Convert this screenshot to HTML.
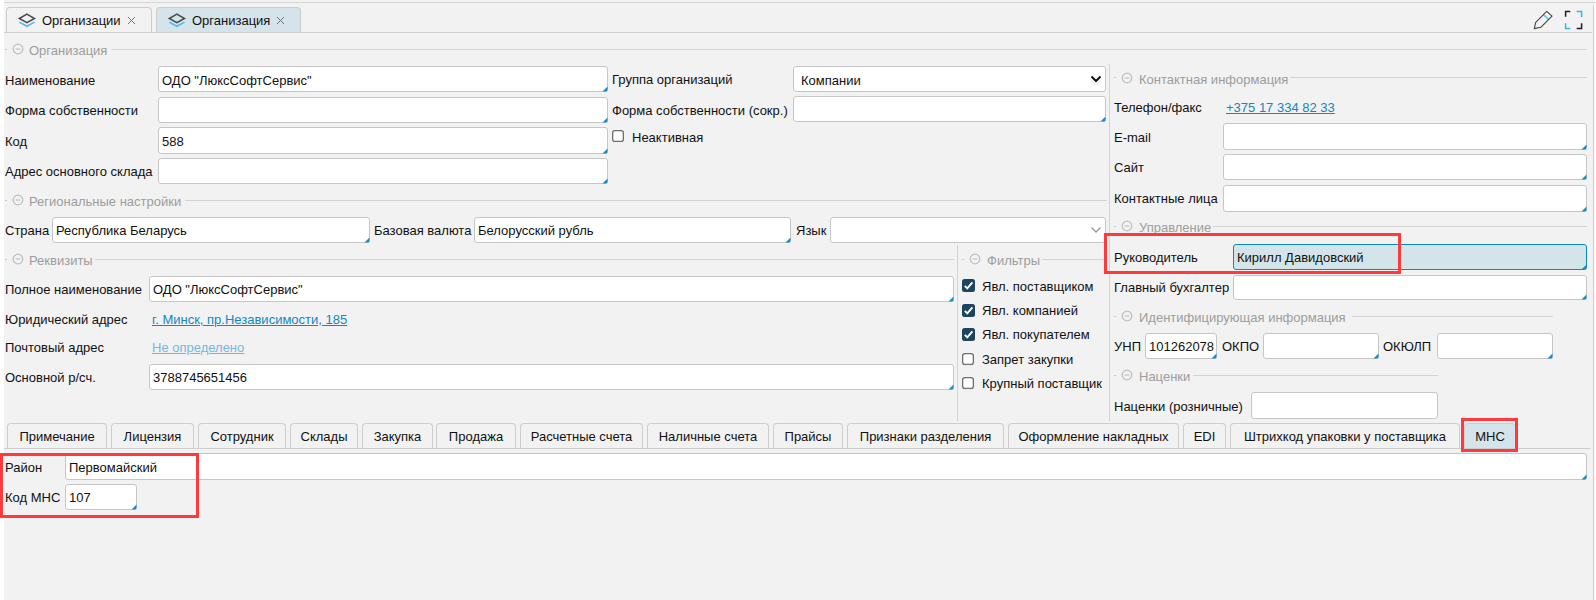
<!DOCTYPE html>
<html><head><meta charset="utf-8"><style>
html,body{margin:0;padding:0;}
body{width:1596px;height:600px;overflow:hidden;background:#f2f2f2;position:relative;font-family:"Liberation Sans", sans-serif;font-size:13px;}
.t{position:absolute;white-space:pre;line-height:15px;font-size:13px;}
.b{position:absolute;box-sizing:border-box;}
.s{position:absolute;overflow:visible;}
</style></head><body>

<div class="b" style="left:0;top:0;width:4px;height:600px;background:#fff"></div>
<div class="b" style="left:1594px;top:0;width:2px;height:600px;background:#fbfbfb"></div>
<div class="b" style="left:4px;top:2px;width:1592px;height:1px;background:#d6d6d6"></div>
<div class="b" style="left:1593px;top:5px;width:1px;height:595px;background:#cfcfcf"></div>
<div class="b" style="left:4px;top:32px;width:1588px;height:1px;background:#cfcfcf"></div>
<div class="b" style="left:6px;top:7px;width:146px;height:26px;background:#f2f2f2;border:1px solid #cdcdcd;border-bottom:none;border-radius:4px 4px 0 0"></div>
<div class="b" style="left:156px;top:7px;width:145px;height:26px;background:#d5e4ea;border:1px solid #cdcdcd;border-bottom:none;border-radius:4px 4px 0 0"></div>
<div class="b" style="left:4px;top:32px;width:1588px;height:1px;background:#cfcfcf"></div>
<svg class="s" style="left:17px;top:12px" width="20" height="16" viewBox="0 0 20 16"><path d="M2.3 10.1 L9.9 14.3 L17.5 10.1" fill="none" stroke="#4cbdee" stroke-width="1.6"/><path d="M9.9 2.2 L17.5 6.5 L9.9 10.7 L2.3 6.5 Z" fill="none" stroke="#4a4a4a" stroke-width="1.5"/></svg>
<div class="t" style="left:42px;top:13px;color:#111111;">Организации</div>
<svg class="s" style="left:167px;top:12px" width="20" height="16" viewBox="0 0 20 16"><path d="M2.3 10.1 L9.9 14.3 L17.5 10.1" fill="none" stroke="#4cbdee" stroke-width="1.6"/><path d="M9.9 2.2 L17.5 6.5 L9.9 10.7 L2.3 6.5 Z" fill="none" stroke="#4a4a4a" stroke-width="1.5"/></svg>
<div class="t" style="left:192px;top:13px;color:#111111;">Организация</div>
<svg class="s" style="left:127px;top:16px" width="9" height="9" viewBox="0 0 9 9"><path d="M1 1 L8 8 M8 1 L1 8" stroke="#707070" stroke-width="1"/></svg>
<svg class="s" style="left:276px;top:16px" width="9" height="9" viewBox="0 0 9 9"><path d="M1 1 L8 8 M8 1 L1 8" stroke="#707070" stroke-width="1"/></svg>
<svg class="s" style="left:1533px;top:10px" width="21" height="21" viewBox="0 0 21 21"><path d="M10.4 4.6 L15.6 9.4" stroke="#62c6ee" stroke-width="1.6"/><path d="M1.3 18.6 L2.7 12.3 L13.7 1.3 L19 6.2 L7.8 17.3 Z" fill="none" stroke="#454545" stroke-width="1.1" stroke-linejoin="round"/></svg>
<svg class="s" style="left:1564px;top:10px" width="20" height="20" viewBox="0 0 20 20"><path d="M1.6 6.8 V1.6 H6.3" fill="none" stroke="#1e1e1e" stroke-width="1.5"/><path d="M12.7 1.6 H17.6 V6.9" fill="none" stroke="#2ab6f0" stroke-width="1.5"/><path d="M1.6 13.3 V18.4 H6.3" fill="none" stroke="#2ab6f0" stroke-width="1.5"/><path d="M12.7 18.4 H17.6 V13.3" fill="none" stroke="#1e1e1e" stroke-width="1.5"/></svg>
<div class="b" style="left:5px;top:49px;width:2px;height:1px;background:#c8c8c8"></div>
<svg class="s" style="left:11.5px;top:43.3px" width="12" height="12" viewBox="0 0 12 12"><circle cx="6" cy="6" r="4.8" fill="none" stroke="#c0c0c0" stroke-width="1.3"/><path d="M3.7 6 H8.3" stroke="#c4c4c4" stroke-width="1.3"/></svg>
<div class="t" style="left:29px;top:43px;color:#9d9d9d;">Организация</div>
<div class="b" style="left:111px;top:49px;width:1476px;height:1px;background:#d4d4d4"></div>
<div class="t" style="left:5px;top:73px;color:#111111;">Наименование</div>
<div class="t" style="left:5px;top:103px;color:#111111;">Форма собственности</div>
<div class="t" style="left:5px;top:134px;color:#111111;">Код</div>
<div class="t" style="left:5px;top:164px;color:#111111;">Адрес основного склада</div>
<div class="b" style="left:158px;top:66px;width:450px;height:26px;background:#fff;border:1px solid #c6c6c6;border-radius:3px;"></div>
<svg class="s" style="left:602px;top:86px" width="6" height="6" viewBox="0 0 6 6"><path d="M5.5 0.5 L5.5 4 Q5.5 5.5 4 5.5 L0.5 5.5 Z" fill="#1b8ac4"/></svg>
<div class="t" style="left:162px;top:73px;color:#111111;">ОДО &quot;ЛюксСофтСервис&quot;</div>
<div class="b" style="left:158px;top:97px;width:450px;height:26px;background:#fff;border:1px solid #c6c6c6;border-radius:3px;"></div>
<svg class="s" style="left:602px;top:117px" width="6" height="6" viewBox="0 0 6 6"><path d="M5.5 0.5 L5.5 4 Q5.5 5.5 4 5.5 L0.5 5.5 Z" fill="#1b8ac4"/></svg>
<div class="b" style="left:158px;top:127px;width:450px;height:27px;background:#fff;border:1px solid #c6c6c6;border-radius:3px;"></div>
<svg class="s" style="left:602px;top:148px" width="6" height="6" viewBox="0 0 6 6"><path d="M5.5 0.5 L5.5 4 Q5.5 5.5 4 5.5 L0.5 5.5 Z" fill="#1b8ac4"/></svg>
<div class="t" style="left:162px;top:134px;color:#111111;">588</div>
<div class="b" style="left:158px;top:158px;width:450px;height:26px;background:#fff;border:1px solid #c6c6c6;border-radius:3px;"></div>
<svg class="s" style="left:602px;top:178px" width="6" height="6" viewBox="0 0 6 6"><path d="M5.5 0.5 L5.5 4 Q5.5 5.5 4 5.5 L0.5 5.5 Z" fill="#1b8ac4"/></svg>
<div class="t" style="left:612px;top:72px;color:#111111;">Группа организаций</div>
<div class="b" style="left:793px;top:66px;width:313px;height:26px;background:#fff;border:1px solid #c6c6c6;border-radius:3px;"></div>
<div class="t" style="left:801px;top:73px;color:#111111;">Компании</div>
<svg class="s" style="left:1090px;top:75px" width="12" height="8" viewBox="0 0 12 8"><path d="M1.5 1.5 L6 6 L10.5 1.5" fill="none" stroke="#111" stroke-width="2"/></svg>
<div class="t" style="left:612px;top:103px;color:#111111;">Форма собственности (сокр.)</div>
<div class="b" style="left:793px;top:96px;width:313px;height:26px;background:#fff;border:1px solid #c6c6c6;border-radius:3px;"></div>
<svg class="s" style="left:1100px;top:116px" width="6" height="6" viewBox="0 0 6 6"><path d="M5.5 0.5 L5.5 4 Q5.5 5.5 4 5.5 L0.5 5.5 Z" fill="#1b8ac4"/></svg>
<svg class="s" style="left:612px;top:130px" width="12" height="12" viewBox="0 0 12 12"><rect x="0.65" y="0.65" width="10.7" height="10.7" rx="2.2" fill="#fff" stroke="#6e6e6e" stroke-width="1.3"/></svg>
<div class="t" style="left:632px;top:130px;color:#111111;">Неактивная</div>
<div class="b" style="left:1109px;top:64px;width:1px;height:357px;background:#d4d4d4"></div>
<div class="b" style="left:1114px;top:77px;width:2px;height:1px;background:#c8c8c8"></div>
<svg class="s" style="left:1120.5px;top:72px" width="12" height="12" viewBox="0 0 12 12"><circle cx="6" cy="6" r="4.8" fill="none" stroke="#c0c0c0" stroke-width="1.3"/><path d="M3.7 6 H8.3" stroke="#c4c4c4" stroke-width="1.3"/></svg>
<div class="t" style="left:1139px;top:72px;color:#9d9d9d;">Контактная информация</div>
<div class="b" style="left:1290px;top:77px;width:297px;height:1px;background:#d4d4d4"></div>
<div class="t" style="left:1114px;top:100px;color:#111111;">Телефон/факс</div>
<div class="t" style="left:1226px;top:100px;color:#1287c0;text-decoration:underline;">+375 17 334 82 33</div>
<div class="t" style="left:1114px;top:130px;color:#111111;">E-mail</div>
<div class="b" style="left:1223px;top:123px;width:364px;height:27px;background:#fff;border:1px solid #c6c6c6;border-radius:3px;"></div>
<svg class="s" style="left:1581px;top:144px" width="6" height="6" viewBox="0 0 6 6"><path d="M5.5 0.5 L5.5 4 Q5.5 5.5 4 5.5 L0.5 5.5 Z" fill="#1b8ac4"/></svg>
<div class="t" style="left:1114px;top:160px;color:#111111;">Сайт</div>
<div class="b" style="left:1223px;top:154px;width:364px;height:26px;background:#fff;border:1px solid #c6c6c6;border-radius:3px;"></div>
<svg class="s" style="left:1581px;top:174px" width="6" height="6" viewBox="0 0 6 6"><path d="M5.5 0.5 L5.5 4 Q5.5 5.5 4 5.5 L0.5 5.5 Z" fill="#1b8ac4"/></svg>
<div class="t" style="left:1114px;top:191px;color:#111111;">Контактные лица</div>
<div class="b" style="left:1223px;top:185px;width:364px;height:27px;background:#fff;border:1px solid #c6c6c6;border-radius:3px;"></div>
<svg class="s" style="left:1581px;top:206px" width="6" height="6" viewBox="0 0 6 6"><path d="M5.5 0.5 L5.5 4 Q5.5 5.5 4 5.5 L0.5 5.5 Z" fill="#1b8ac4"/></svg>
<div class="b" style="left:1114px;top:226px;width:2px;height:1px;background:#c8c8c8"></div>
<svg class="s" style="left:1120.5px;top:220.3px" width="12" height="12" viewBox="0 0 12 12"><circle cx="6" cy="6" r="4.8" fill="none" stroke="#c0c0c0" stroke-width="1.3"/><path d="M3.7 6 H8.3" stroke="#c4c4c4" stroke-width="1.3"/></svg>
<div class="t" style="left:1139px;top:220px;color:#9d9d9d;">Управление</div>
<div class="b" style="left:1213px;top:226px;width:374px;height:1px;background:#d4d4d4"></div>
<div class="t" style="left:1114px;top:250px;color:#111111;">Руководитель</div>
<div class="b" style="left:1233px;top:244px;width:354px;height:26px;background:#d4e5ea;border:1px solid #0b89be;border-radius:3px;"></div>
<svg class="s" style="left:1581px;top:264px" width="6" height="6" viewBox="0 0 6 6"><path d="M5.5 0.5 L5.5 4 Q5.5 5.5 4 5.5 L0.5 5.5 Z" fill="#1b8ac4"/></svg>
<div class="t" style="left:1237px;top:250px;color:#111111;">Кирилл Давидовский</div>
<div class="t" style="left:1114px;top:280px;color:#111111;">Главный бухгалтер</div>
<div class="b" style="left:1233px;top:275px;width:354px;height:25px;background:#fff;border:1px solid #c6c6c6;border-radius:3px;"></div>
<svg class="s" style="left:1581px;top:294px" width="6" height="6" viewBox="0 0 6 6"><path d="M5.5 0.5 L5.5 4 Q5.5 5.5 4 5.5 L0.5 5.5 Z" fill="#1b8ac4"/></svg>
<div class="b" style="left:1114px;top:316px;width:2px;height:1px;background:#c8c8c8"></div>
<svg class="s" style="left:1120.5px;top:310.3px" width="12" height="12" viewBox="0 0 12 12"><circle cx="6" cy="6" r="4.8" fill="none" stroke="#c0c0c0" stroke-width="1.3"/><path d="M3.7 6 H8.3" stroke="#c4c4c4" stroke-width="1.3"/></svg>
<div class="t" style="left:1139px;top:310px;color:#9d9d9d;">Идентифицирующая информация</div>
<div class="b" style="left:1352px;top:316px;width:201px;height:1px;background:#d4d4d4"></div>
<div class="t" style="left:1114px;top:339px;color:#111111;">УНП</div>
<div class="b" style="left:1145px;top:333px;width:72px;height:26px;background:#fff;border:1px solid #c6c6c6;border-radius:3px;"></div>
<svg class="s" style="left:1211px;top:353px" width="6" height="6" viewBox="0 0 6 6"><path d="M5.5 0.5 L5.5 4 Q5.5 5.5 4 5.5 L0.5 5.5 Z" fill="#1b8ac4"/></svg>
<div class="t" style="left:1149px;top:339px;color:#111111;">101262078</div>
<div class="t" style="left:1222px;top:339px;color:#111111;">ОКПО</div>
<div class="b" style="left:1263px;top:333px;width:116px;height:26px;background:#fff;border:1px solid #c6c6c6;border-radius:3px;"></div>
<svg class="s" style="left:1373px;top:353px" width="6" height="6" viewBox="0 0 6 6"><path d="M5.5 0.5 L5.5 4 Q5.5 5.5 4 5.5 L0.5 5.5 Z" fill="#1b8ac4"/></svg>
<div class="t" style="left:1383px;top:339px;color:#111111;">ОКЮЛП</div>
<div class="b" style="left:1437px;top:333px;width:116px;height:26px;background:#fff;border:1px solid #c6c6c6;border-radius:3px;"></div>
<svg class="s" style="left:1547px;top:353px" width="6" height="6" viewBox="0 0 6 6"><path d="M5.5 0.5 L5.5 4 Q5.5 5.5 4 5.5 L0.5 5.5 Z" fill="#1b8ac4"/></svg>
<div class="b" style="left:1114px;top:375px;width:2px;height:1px;background:#c8c8c8"></div>
<svg class="s" style="left:1120.5px;top:369.3px" width="12" height="12" viewBox="0 0 12 12"><circle cx="6" cy="6" r="4.8" fill="none" stroke="#c0c0c0" stroke-width="1.3"/><path d="M3.7 6 H8.3" stroke="#c4c4c4" stroke-width="1.3"/></svg>
<div class="t" style="left:1139px;top:369px;color:#9d9d9d;">Наценки</div>
<div class="b" style="left:1193px;top:375px;width:245px;height:1px;background:#d4d4d4"></div>
<div class="t" style="left:1114px;top:399px;color:#111111;">Наценки (розничные)</div>
<div class="b" style="left:1251px;top:392px;width:187px;height:27px;background:#fff;border:1px solid #c6c6c6;border-radius:3px;"></div>
<div class="b" style="left:5px;top:200px;width:2px;height:1px;background:#c8c8c8"></div>
<svg class="s" style="left:11.5px;top:194.3px" width="12" height="12" viewBox="0 0 12 12"><circle cx="6" cy="6" r="4.8" fill="none" stroke="#c0c0c0" stroke-width="1.3"/><path d="M3.7 6 H8.3" stroke="#c4c4c4" stroke-width="1.3"/></svg>
<div class="t" style="left:29px;top:194px;color:#9d9d9d;">Региональные настройки</div>
<div class="b" style="left:185px;top:200px;width:922px;height:1px;background:#d4d4d4"></div>
<div class="t" style="left:5px;top:223px;color:#111111;">Страна</div>
<div class="b" style="left:52px;top:217px;width:318px;height:26px;background:#fff;border:1px solid #c6c6c6;border-radius:3px;"></div>
<svg class="s" style="left:364px;top:237px" width="6" height="6" viewBox="0 0 6 6"><path d="M5.5 0.5 L5.5 4 Q5.5 5.5 4 5.5 L0.5 5.5 Z" fill="#1b8ac4"/></svg>
<div class="t" style="left:56px;top:223px;color:#111111;">Республика Беларусь</div>
<div class="t" style="left:374px;top:223px;color:#111111;">Базовая валюта</div>
<div class="b" style="left:474px;top:217px;width:317px;height:26px;background:#fff;border:1px solid #c6c6c6;border-radius:3px;"></div>
<svg class="s" style="left:785px;top:237px" width="6" height="6" viewBox="0 0 6 6"><path d="M5.5 0.5 L5.5 4 Q5.5 5.5 4 5.5 L0.5 5.5 Z" fill="#1b8ac4"/></svg>
<div class="t" style="left:478px;top:223px;color:#111111;">Белорусский рубль</div>
<div class="t" style="left:796px;top:223px;color:#111111;">Язык</div>
<div class="b" style="left:830px;top:217px;width:276px;height:26px;background:#fff;border:1px solid #c6c6c6;border-radius:3px;"></div>
<svg class="s" style="left:1090px;top:226px" width="12" height="8" viewBox="0 0 12 8"><path d="M1.5 1.5 L6 6 L10.5 1.5" fill="none" stroke="#9a9a9a" stroke-width="1.3"/></svg>
<div class="b" style="left:5px;top:259px;width:2px;height:1px;background:#c8c8c8"></div>
<svg class="s" style="left:11.5px;top:253.3px" width="12" height="12" viewBox="0 0 12 12"><circle cx="6" cy="6" r="4.8" fill="none" stroke="#c0c0c0" stroke-width="1.3"/><path d="M3.7 6 H8.3" stroke="#c4c4c4" stroke-width="1.3"/></svg>
<div class="t" style="left:29px;top:253px;color:#9d9d9d;">Реквизиты</div>
<div class="b" style="left:95px;top:259px;width:859px;height:1px;background:#d4d4d4"></div>
<div class="t" style="left:5px;top:282px;color:#111111;">Полное наименование</div>
<div class="b" style="left:149px;top:276px;width:805px;height:26px;background:#fff;border:1px solid #c6c6c6;border-radius:3px;"></div>
<svg class="s" style="left:948px;top:296px" width="6" height="6" viewBox="0 0 6 6"><path d="M5.5 0.5 L5.5 4 Q5.5 5.5 4 5.5 L0.5 5.5 Z" fill="#1b8ac4"/></svg>
<div class="t" style="left:153px;top:282px;color:#111111;">ОДО &quot;ЛюксСофтСервис&quot;</div>
<div class="t" style="left:5px;top:312px;color:#111111;">Юридический адрес</div>
<div class="t" style="left:152px;top:312px;color:#1287c0;text-decoration:underline;">г. Минск, пр.Независимости, 185</div>
<div class="t" style="left:5px;top:340px;color:#111111;">Почтовый адрес</div>
<div class="t" style="left:152px;top:340px;color:#78b6dc;text-decoration:underline;">Не определено</div>
<div class="t" style="left:5px;top:370px;color:#111111;">Основной р/сч.</div>
<div class="b" style="left:149px;top:364px;width:805px;height:26px;background:#fff;border:1px solid #c6c6c6;border-radius:3px;"></div>
<svg class="s" style="left:948px;top:384px" width="6" height="6" viewBox="0 0 6 6"><path d="M5.5 0.5 L5.5 4 Q5.5 5.5 4 5.5 L0.5 5.5 Z" fill="#1b8ac4"/></svg>
<div class="t" style="left:153px;top:370px;color:#111111;">3788745651456</div>
<div class="b" style="left:957px;top:245px;width:1px;height:176px;background:#d4d4d4"></div>
<div class="b" style="left:962px;top:259px;width:2px;height:1px;background:#c8c8c8"></div>
<svg class="s" style="left:968.5px;top:253.3px" width="12" height="12" viewBox="0 0 12 12"><circle cx="6" cy="6" r="4.8" fill="none" stroke="#c0c0c0" stroke-width="1.3"/><path d="M3.7 6 H8.3" stroke="#c4c4c4" stroke-width="1.3"/></svg>
<div class="t" style="left:987px;top:253px;color:#9d9d9d;">Фильтры</div>
<div class="b" style="left:1042px;top:259px;width:65px;height:1px;background:#d4d4d4"></div>
<svg class="s" style="left:962px;top:279px" width="13" height="13" viewBox="0 0 13 13"><rect x="0" y="0" width="13" height="13" rx="2.5" fill="#1d4560"/><path d="M2.8 6.8 L5.3 9.4 L10.4 3.4" fill="none" stroke="#fff" stroke-width="1.9"/></svg>
<div class="t" style="left:982px;top:279px;color:#111111;">Явл. поставщиком</div>
<svg class="s" style="left:962px;top:303.5px" width="13" height="13" viewBox="0 0 13 13"><rect x="0" y="0" width="13" height="13" rx="2.5" fill="#1d4560"/><path d="M2.8 6.8 L5.3 9.4 L10.4 3.4" fill="none" stroke="#fff" stroke-width="1.9"/></svg>
<div class="t" style="left:982px;top:303px;color:#111111;">Явл. компанией</div>
<svg class="s" style="left:962px;top:328px" width="13" height="13" viewBox="0 0 13 13"><rect x="0" y="0" width="13" height="13" rx="2.5" fill="#1d4560"/><path d="M2.8 6.8 L5.3 9.4 L10.4 3.4" fill="none" stroke="#fff" stroke-width="1.9"/></svg>
<div class="t" style="left:982px;top:327px;color:#111111;">Явл. покупателем</div>
<svg class="s" style="left:962px;top:352.5px" width="12" height="12" viewBox="0 0 12 12"><rect x="0.65" y="0.65" width="10.7" height="10.7" rx="2.2" fill="#fff" stroke="#6e6e6e" stroke-width="1.3"/></svg>
<div class="t" style="left:982px;top:352px;color:#111111;">Запрет закупки</div>
<svg class="s" style="left:962px;top:376.5px" width="12" height="12" viewBox="0 0 12 12"><rect x="0.65" y="0.65" width="10.7" height="10.7" rx="2.2" fill="#fff" stroke="#6e6e6e" stroke-width="1.3"/></svg>
<div class="t" style="left:982px;top:376px;color:#111111;">Крупный поставщик</div>
<div class="b" style="left:7px;top:423px;width:100px;height:26px;background:#f2f2f2;border:1px solid #cdcdcd;border-bottom:none;border-radius:4px 4px 0 0"></div>
<div class="t" style="left:7px;width:100px;text-align:center;top:429px;color:#111111">Примечание</div>
<div class="b" style="left:111px;top:423px;width:83px;height:26px;background:#f2f2f2;border:1px solid #cdcdcd;border-bottom:none;border-radius:4px 4px 0 0"></div>
<div class="t" style="left:111px;width:83px;text-align:center;top:429px;color:#111111">Лицензия</div>
<div class="b" style="left:198px;top:423px;width:88px;height:26px;background:#f2f2f2;border:1px solid #cdcdcd;border-bottom:none;border-radius:4px 4px 0 0"></div>
<div class="t" style="left:198px;width:88px;text-align:center;top:429px;color:#111111">Сотрудник</div>
<div class="b" style="left:290px;top:423px;width:68px;height:26px;background:#f2f2f2;border:1px solid #cdcdcd;border-bottom:none;border-radius:4px 4px 0 0"></div>
<div class="t" style="left:290px;width:68px;text-align:center;top:429px;color:#111111">Склады</div>
<div class="b" style="left:362px;top:423px;width:71px;height:26px;background:#f2f2f2;border:1px solid #cdcdcd;border-bottom:none;border-radius:4px 4px 0 0"></div>
<div class="t" style="left:362px;width:71px;text-align:center;top:429px;color:#111111">Закупка</div>
<div class="b" style="left:436px;top:423px;width:80px;height:26px;background:#f2f2f2;border:1px solid #cdcdcd;border-bottom:none;border-radius:4px 4px 0 0"></div>
<div class="t" style="left:436px;width:80px;text-align:center;top:429px;color:#111111">Продажа</div>
<div class="b" style="left:520px;top:423px;width:123px;height:26px;background:#f2f2f2;border:1px solid #cdcdcd;border-bottom:none;border-radius:4px 4px 0 0"></div>
<div class="t" style="left:520px;width:123px;text-align:center;top:429px;color:#111111">Расчетные счета</div>
<div class="b" style="left:647px;top:423px;width:122px;height:26px;background:#f2f2f2;border:1px solid #cdcdcd;border-bottom:none;border-radius:4px 4px 0 0"></div>
<div class="t" style="left:647px;width:122px;text-align:center;top:429px;color:#111111">Наличные счета</div>
<div class="b" style="left:773px;top:423px;width:70px;height:26px;background:#f2f2f2;border:1px solid #cdcdcd;border-bottom:none;border-radius:4px 4px 0 0"></div>
<div class="t" style="left:773px;width:70px;text-align:center;top:429px;color:#111111">Прайсы</div>
<div class="b" style="left:847px;top:423px;width:157px;height:26px;background:#f2f2f2;border:1px solid #cdcdcd;border-bottom:none;border-radius:4px 4px 0 0"></div>
<div class="t" style="left:847px;width:157px;text-align:center;top:429px;color:#111111">Признаки разделения</div>
<div class="b" style="left:1008px;top:423px;width:171px;height:26px;background:#f2f2f2;border:1px solid #cdcdcd;border-bottom:none;border-radius:4px 4px 0 0"></div>
<div class="t" style="left:1008px;width:171px;text-align:center;top:429px;color:#111111">Оформление накладных</div>
<div class="b" style="left:1183px;top:423px;width:43px;height:26px;background:#f2f2f2;border:1px solid #cdcdcd;border-bottom:none;border-radius:4px 4px 0 0"></div>
<div class="t" style="left:1183px;width:43px;text-align:center;top:429px;color:#111111">EDI</div>
<div class="b" style="left:1230px;top:423px;width:230px;height:26px;background:#f2f2f2;border:1px solid #cdcdcd;border-bottom:none;border-radius:4px 4px 0 0"></div>
<div class="t" style="left:1230px;width:230px;text-align:center;top:429px;color:#111111">Штрихкод упаковки у поставщика</div>
<div class="b" style="left:1464px;top:423px;width:52px;height:26px;background:#d5e4ea;border:1px solid #cdcdcd;border-bottom:none;border-radius:4px 4px 0 0"></div>
<div class="t" style="left:1464px;width:52px;text-align:center;top:429px;color:#111111">МНС</div>
<div class="b" style="left:4px;top:448px;width:1586px;height:1px;background:#cdcdcd"></div>
<div class="b" style="left:1461px;top:418px;width:57px;height:34px;border:3px solid #ff3a3c"></div>
<div class="b" style="left:65px;top:453px;width:1522px;height:27px;background:#fff;border:1px solid #c6c6c6;border-radius:3px;"></div>
<svg class="s" style="left:1581px;top:474px" width="6" height="6" viewBox="0 0 6 6"><path d="M5.5 0.5 L5.5 4 Q5.5 5.5 4 5.5 L0.5 5.5 Z" fill="#1b8ac4"/></svg>
<div class="t" style="left:69px;top:460px;color:#111111;">Первомайский</div>
<div class="t" style="left:5px;top:460px;color:#111111;">Район</div>
<div class="t" style="left:5px;top:490px;color:#111111;">Код МНС</div>
<div class="b" style="left:65px;top:484px;width:72px;height:26px;background:#fff;border:1px solid #c6c6c6;border-radius:3px;"></div>
<svg class="s" style="left:131px;top:504px" width="6" height="6" viewBox="0 0 6 6"><path d="M5.5 0.5 L5.5 4 Q5.5 5.5 4 5.5 L0.5 5.5 Z" fill="#1b8ac4"/></svg>
<div class="t" style="left:69px;top:490px;color:#111111;">107</div>
<div class="b" style="left:0px;top:453px;width:199px;height:65px;border:3px solid #ff3a3c"></div>
<div class="b" style="left:1104px;top:233px;width:297px;height:41px;border:3px solid #ff3a3c"></div>
</body></html>
